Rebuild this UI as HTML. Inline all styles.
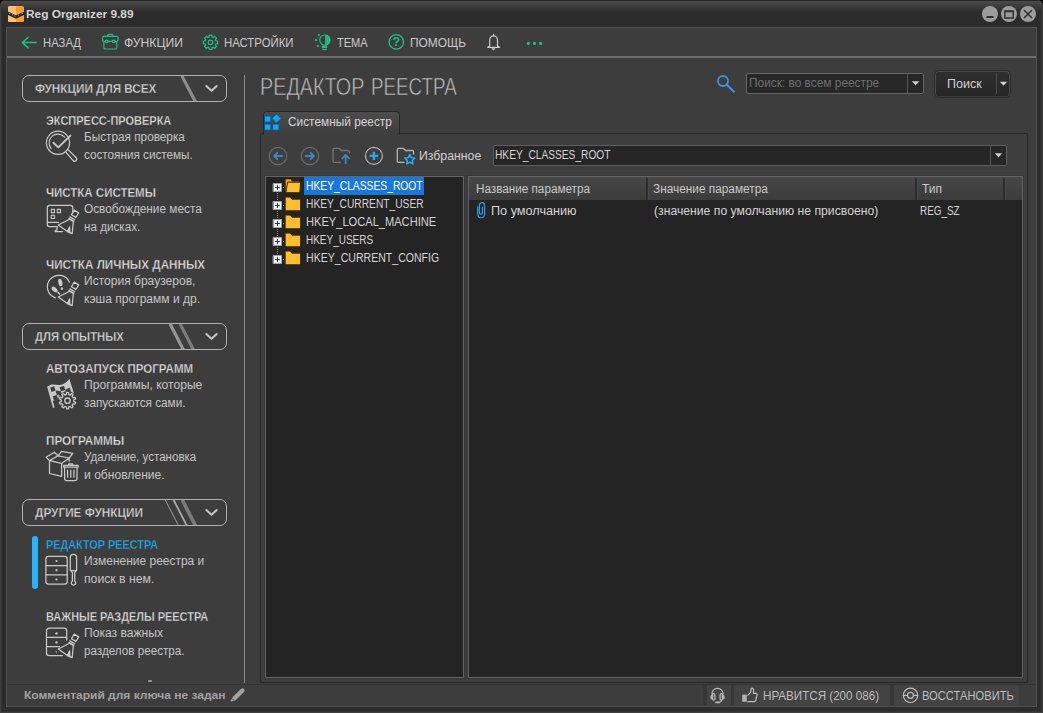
<!DOCTYPE html>
<html lang="ru">
<head>
<meta charset="utf-8">
<title>Reg Organizer 9.89</title>
<style>
*{box-sizing:border-box;margin:0;padding:0}
html,body{width:1043px;height:713px;overflow:hidden;background:#000}
body{font-family:"Liberation Sans",sans-serif;font-size:12px;color:#cfcfcf;position:relative}
.abs,.t{position:absolute}
.t{white-space:nowrap;line-height:16px;height:16px;transform-origin:0 50%}
#win{position:absolute;left:0;top:0;width:1043px;height:713px;background:#2c2c2c;border-radius:6px 6px 0 0;overflow:hidden;box-shadow:inset 0 0 0 1px #404040,inset 0 0 0 2px #333}
#titlegrad{position:absolute;left:1px;top:0;width:1041px;height:12px;background:linear-gradient(#262626 0,#262626 1px,#4b4b4b 1px,#454545 3px,#2c2c2c 12px)}
#frame{position:absolute;left:6px;top:27px;width:1031px;height:680px;background:#3d3d3d;border:1px solid #525252}
#tbsep{position:absolute;left:7px;top:56px;width:1029px;height:2px;background:#6e6e6e}
.wb{position:absolute;top:6px;width:16px;height:16px;border-radius:8px;background:#9c9c9c}
svg{position:absolute;overflow:visible}
.tb{font-size:12.8px;color:#c9c9c9;top:35px}
.hd{position:absolute;left:22px;width:205px;height:27px;border:1px solid #b2b2b2;border-radius:7px}
.hdt{font-size:12px;color:#d6d6d6;font-weight:bold;-webkit-text-stroke:.3px #3d3d3d}
.it{font-size:12.4px;font-weight:bold;color:#dedede;-webkit-text-stroke:.3px #3d3d3d}
.ds{font-size:12px;color:#c4c4c4}
.tr{font-size:12px;color:#d4d4d4}
.sb{font-size:12px;color:#bdbdbd}
</style>
</head>
<body>
<div id="win">
<div id="titlegrad"></div>
<div id="frame"></div>
<div id="tbsep"></div>

<!-- title -->
<span class="t" id="ttl" style="left:26.4px;top:6px;font-size:11px;font-weight:bold;color:#d4d4d4;transform:scaleX(1.079)">Reg Organizer 9.89</span>
<div class="wb" style="left:982px"></div>
<div class="wb" style="left:1001px"></div>
<div class="wb" style="left:1020px"></div>

<!-- toolbar -->
<span class="t tb" id="tb1" style="left:42.8px;transform:scaleX(0.883)">НАЗАД</span>
<span class="t tb" id="tb2" style="left:123.6px;transform:scaleX(0.953)">ФУНКЦИИ</span>
<span class="t tb" id="tb3" style="left:223.6px;transform:scaleX(0.888)">НАСТРОЙКИ</span>
<span class="t tb" id="tb4" style="left:336.7px;transform:scaleX(0.863)">ТЕМА</span>
<span class="t tb" id="tb5" style="left:410.2px;transform:scaleX(0.932)">ПОМОЩЬ</span>

<!-- left panel -->
<div class="abs" style="left:244px;top:75px;width:1px;height:608px;background:#8e8e8e"></div>

<div class="hd" style="top:75px"></div>
<span class="t hdt" id="h1" style="left:34.7px;top:81px;transform:scaleX(0.976)">ФУНКЦИИ ДЛЯ ВСЕХ</span>
<div class="hd" style="top:323px"></div>
<span class="t hdt" id="h2" style="left:34.9px;top:329px;transform:scaleX(0.941)">ДЛЯ ОПЫТНЫХ</span>
<div class="hd" style="top:499px"></div>
<span class="t hdt" id="h3" style="left:35.1px;top:505px;transform:scaleX(0.983)">ДРУГИЕ ФУНКЦИИ</span>

<span class="t it" id="i1" style="left:46.2px;top:113px;transform:scaleX(0.887)">ЭКСПРЕСС-ПРОВЕРКА</span>
<span class="t ds" id="d1a" style="left:84.1px;top:129px;transform:scaleX(0.981)">Быстрая проверка</span>
<span class="t ds" id="d1b" style="left:84.1px;top:147px;transform:scaleX(0.976)">состояния системы.</span>

<span class="t it" id="i2" style="left:46.2px;top:185px;transform:scaleX(0.927)">ЧИСТКА СИСТЕМЫ</span>
<span class="t ds" id="d2a" style="left:84.1px;top:201px;transform:scaleX(0.984)">Освобождение места</span>
<span class="t ds" id="d2b" style="left:84.1px;top:219px;transform:scaleX(0.972)">на дисках.</span>

<span class="t it" id="i3" style="left:46.2px;top:257px;transform:scaleX(0.942)">ЧИСТКА ЛИЧНЫХ ДАННЫХ</span>
<span class="t ds" id="d3a" style="left:84.1px;top:273px;transform:scaleX(1.003)">История браузеров,</span>
<span class="t ds" id="d3b" style="left:84.1px;top:291px;transform:scaleX(1.005)">кэша программ и др.</span>

<span class="t it" id="i4" style="left:46.2px;top:361px;transform:scaleX(0.932)">АВТОЗАПУСК ПРОГРАММ</span>
<span class="t ds" id="d4a" style="left:84.1px;top:377px;transform:scaleX(1.009)">Программы, которые</span>
<span class="t ds" id="d4b" style="left:84.1px;top:395px;transform:scaleX(0.980)">запускаются сами.</span>

<span class="t it" id="i5" style="left:46.2px;top:433px;transform:scaleX(0.948)">ПРОГРАММЫ</span>
<span class="t ds" id="d5a" style="left:84.1px;top:449px;transform:scaleX(0.964)">Удаление, установка</span>
<span class="t ds" id="d5b" style="left:84.1px;top:467px;transform:scaleX(1.009)">и обновление.</span>

<div class="abs" style="left:31.7px;top:535.5px;width:6.6px;height:53px;border-radius:3.3px;background:#2cb2f5"></div>
<div class="abs" style="left:148px;top:680px;width:4px;height:2px;background:#999;border-radius:1px"></div>
<span class="t it" id="i6" style="left:46.2px;top:537px;color:#1ea7ee;transform:scaleX(0.876)">РЕДАКТОР РЕЕСТРА</span>
<span class="t ds" id="d6a" style="left:84.1px;top:553px;transform:scaleX(0.997)">Изменение реестра и</span>
<span class="t ds" id="d6b" style="left:84.1px;top:571px;transform:scaleX(1.018)">поиск в нем.</span>

<span class="t it" id="i7" style="left:46.2px;top:609px;transform:scaleX(0.883)">ВАЖНЫЕ РАЗДЕЛЫ РЕЕСТРА</span>
<span class="t ds" id="d7a" style="left:84.1px;top:625px;transform:scaleX(1.007)">Показ важных</span>
<span class="t ds" id="d7b" style="left:84.1px;top:643px;transform:scaleX(0.972)">разделов реестра.</span>

<!-- main -->
<span class="t" id="mh" style="left:259.9px;top:71.5px;height:30px;line-height:30px;font-size:23.3px;color:#bcbcbc;word-spacing:1px;-webkit-text-stroke:.55px #3d3d3d;transform:scaleX(0.851)">РЕДАКТОР</span> <span class="t" id="mh2" style="left:371.4px;top:71.5px;height:30px;line-height:30px;font-size:23.3px;color:#bcbcbc;word-spacing:1px;-webkit-text-stroke:.55px #3d3d3d;transform:scaleX(0.807)">РЕЕСТРА</span>

<!-- search -->
<div class="abs" style="left:746px;top:73px;width:178px;height:21px;background:#272727;border:1px solid #666;border-radius:2px"></div>
<div class="abs" style="left:907px;top:74px;width:1px;height:19px;background:#555"></div>
<span class="t" id="sph" style="left:748.5px;top:75px;font-size:12px;color:#6f6f6f;transform:scaleX(0.990)">Поиск: во всем реестре</span>
<div class="abs" style="left:934px;top:70px;width:77px;height:28px;background:#2b2b2b;border-radius:5px"></div>
<div class="abs" style="left:935px;top:71px;width:75px;height:26px;background:linear-gradient(#2e2e2e,#272727);border:1px solid #4a4a4a;border-bottom-color:#3a3a3a;border-radius:4px"></div>
<div class="abs" style="left:996px;top:73px;width:1px;height:21px;background:#4c4c4c"></div>
<span class="t" id="sbt" style="left:947.4px;top:75.5px;font-size:12.5px;color:#d0d0d0;transform:scaleX(0.999)">Поиск</span>

<!-- tab + content -->
<div class="abs" style="left:260px;top:133px;width:768px;height:550px;background:#3e3e3e;border:1px solid #272727;border-radius:0 2px 2px 2px"></div>
<div class="abs" style="left:263px;top:111px;width:137px;height:24px;background:linear-gradient(#4c4c4c,#3e3e3e);border:1px solid #272727;border-bottom:none;border-radius:4px 4px 0 0"></div>
<span class="t" id="tabt" style="left:287.5px;top:113.7px;font-size:12px;color:#d4d4d4;transform:scaleX(0.988)">Системный реестр</span>

<span class="t" id="fav" style="left:418.7px;top:147.5px;font-size:12px;color:#d0d0d0;transform:scaleX(1.023)">Избранное</span>
<div class="abs" style="left:493px;top:145px;width:514px;height:21px;background:#262626;border:1px solid #5e5e5e;border-radius:2px"></div>
<div class="abs" style="left:990px;top:146px;width:1px;height:19px;background:#555"></div>
<span class="t tr" id="addr" style="left:494.5px;top:147px;transform:scaleX(0.849)">HKEY_CLASSES_ROOT</span>

<!-- tree -->
<div class="abs" style="left:264px;top:175px;width:201px;height:504px;background:#363636"></div>
<div class="abs" style="left:265px;top:176px;width:199px;height:502px;background:#242424;border:1px solid #646464"></div>
<div class="abs" style="left:304px;top:177px;width:120px;height:18px;background:#1878d8"></div>
<span class="t tr" id="k1" style="left:306.4px;top:178px;color:#fff;transform:scaleX(0.857)">HKEY_CLASSES_ROOT</span>
<span class="t tr" id="k2" style="left:306.0px;top:196px;transform:scaleX(0.852)">HKEY_CURRENT_USER</span>
<span class="t tr" id="k3" style="left:306.2px;top:214px;transform:scaleX(0.925)">HKEY_LOCAL_MACHINE</span>
<span class="t tr" id="k4" style="left:306.0px;top:232px;transform:scaleX(0.831)">HKEY_USERS</span>
<span class="t tr" id="k5" style="left:306.0px;top:250px;transform:scaleX(0.880)">HKEY_CURRENT_CONFIG</span>

<!-- list -->
<div class="abs" style="left:467px;top:175px;width:557px;height:504px;background:#363636"></div>
<div class="abs" style="left:468px;top:176px;width:555px;height:502px;background:#242424;border:1px solid #646464"></div>
<div class="abs" style="left:469px;top:177px;width:553px;height:23px;background:linear-gradient(#474747,#3c3c3c)"></div>
<div class="abs" style="left:646px;top:178px;width:3px;height:22px;background:linear-gradient(90deg,#2d2d2d 66%,#484848 66%)"></div>
<div class="abs" style="left:915px;top:178px;width:3px;height:22px;background:linear-gradient(90deg,#2d2d2d 66%,#484848 66%)"></div>
<div class="abs" style="left:1003px;top:178px;width:3px;height:22px;background:linear-gradient(90deg,#2d2d2d 66%,#484848 66%)"></div>
<span class="t tr" id="c1" style="left:475.5px;top:180.5px;color:#c8c8c8;transform:scaleX(0.975)">Название параметра</span>
<span class="t tr" id="c2" style="left:653.3px;top:180.5px;color:#c8c8c8;transform:scaleX(0.986)">Значение параметра</span>
<span class="t tr" id="c3" style="left:922.4px;top:180.5px;color:#c8c8c8;transform:scaleX(1.003)">Тип</span>
<span class="t tr" id="r1" style="left:491.3px;top:202.7px;transform:scaleX(1.055)">По умолчанию</span>
<span class="t tr" id="r2" style="left:654.2px;top:202.7px;transform:scaleX(1.017)">(значение по умолчанию не присвоено)</span>
<span class="t tr" id="r3" style="left:920.3px;top:202.7px;transform:scaleX(0.824)">REG_SZ</span>

<!-- status bar -->
<div class="abs" style="left:7px;top:684px;width:1029px;height:1px;background:#343434"></div>
<div class="abs" style="left:7px;top:685px;width:1029px;height:21px;background:#3d3d3d"></div>
<div class="abs" style="left:703px;top:685px;width:316px;height:20px;background:#373737"></div>
<div class="abs" style="left:707px;top:685px;width:24px;height:20px;background:#434343"></div>
<div class="abs" style="left:734px;top:685px;width:156px;height:20px;background:#434343"></div>
<div class="abs" style="left:894px;top:685px;width:125px;height:20px;background:#434343"></div>
<span class="t" id="st1" style="left:23.5px;top:687px;font-size:11.5px;font-weight:bold;color:#a2a2a2;transform:scaleX(1.043)">Комментарий для ключа не задан</span>
<span class="t sb" id="st2" style="left:762.5px;top:688px;font-size:12.5px;transform:scaleX(0.929)">НРАВИТСЯ (200 086)</span>
<span class="t sb" id="st3" style="left:922.2px;top:688px;font-size:12.5px;transform:scaleX(0.894)">ВОССТАНОВИТЬ</span>

<svg width="1043" height="713" viewBox="0 0 1043 713" style="left:0;top:0" fill="none" stroke-linecap="round" stroke-linejoin="round">
<!-- app icon -->
<g stroke="none">
<rect x="8" y="6" width="16" height="16" rx="1.6" fill="#ff9a35"/>
<path d="M9.6 6H16V22H9.6A1.6 1.6 0 0 1 8 20.4V7.6A1.6 1.6 0 0 1 9.6 6Z" fill="#ffbd7c"/>
<path d="M8 11.6L16 15.2L24 11.7V15L16 18.8L8 15.1Z" fill="#2a2a2a"/>
<rect x="9" y="12.6" width="1.3" height="1.3" fill="#3fbf7f"/><rect x="12" y="14" width="1.3" height="1.3" fill="#e0605a"/><rect x="21.5" y="12.6" width="1.3" height="1.3" fill="#6ab8f0"/><rect x="18" y="14.6" width="1" height="1" fill="#9ab"/><rect x="14.6" y="15.6" width="1" height="1" fill="#9ab"/>
</g>
<!-- window buttons glyphs -->
<g stroke="#2e2e2e" stroke-width="1.6" stroke-linecap="butt" stroke-linejoin="miter">
<path d="M986.5 17H993.5" stroke-width="2"/>
<path d="M1004.8 11H1013.2V18H1004.8Z M1004.8 11.6H1013.2" stroke-width="1.4"/>
<path d="M1024 10L1032 18M1032 10L1024 18" stroke-width="1.5"/>
</g>
<!-- toolbar icons -->
<g stroke="#1fbf84" stroke-width="1.15">
<path d="M36.2 42.6H22.4M28.2 37.3L22.4 42.6L28.2 47.9" stroke-width="1.5"/>
<path d="M107.6 36.3v-.8a1.2 1.2 0 0 1 1.2-1.2h3a1.2 1.2 0 0 1 1.2 1.2v.8"/>
<path d="M103.9 36.3h12.8a1.3 1.3 0 0 1 1.3 1.3v2.4a1.3 1.3 0 0 1-1.3 1.3H115M112.2 41.3h-4.2M105.4 41.3h-1.5a1.3 1.3 0 0 1-1.3-1.3v-2.4a1.3 1.3 0 0 1 1.3-1.3"/>
<circle cx="106.7" cy="41.4" r="1.3"/><circle cx="113.6" cy="41.4" r="1.3"/>
<path d="M103.9 41.5v6.2a1.3 1.3 0 0 0 1.3 1.3h10.2a1.3 1.3 0 0 0 1.3-1.3v-6.2"/>
<path d="M211.80 49.43 L209.20 49.43 L208.89 47.56 L207.92 47.16 L206.38 48.26 L204.54 46.42 L205.64 44.88 L205.24 43.91 L203.37 43.60 L203.37 41.00 L205.24 40.69 L205.64 39.72 L204.54 38.18 L206.38 36.34 L207.92 37.44 L208.89 37.04 L209.20 35.17 L211.80 35.17 L212.11 37.04 L213.08 37.44 L214.62 36.34 L216.46 38.18 L215.36 39.72 L215.76 40.69 L217.63 41.00 L217.63 43.60 L215.76 43.91 L215.36 44.88 L216.46 46.42 L214.62 48.26 L213.08 47.16 L212.11 47.56Z" stroke-width="1.25"/>
<circle cx="210.5" cy="42.3" r="2.3" stroke-width="1.25"/>
<circle cx="324.7" cy="40" r="5" stroke-width="1.1"/>
<circle cx="396.3" cy="41.9" r="7.2" stroke-width="1.3"/>
</g>
<g fill="#1fbf84" stroke="none">
<path d="M325.2 34.6A5.4 5.4 0 0 1 325.2 45.4Z"/>
<path d="M321.9 45.6h5.3v2.3h-5.3zM321.9 48.7h5.3a2.6 1.6 0 0 1-5.3 0z"/>
<rect x="317.9" y="34" width="1.9" height="1.9" rx=".6"/><rect x="315.1" y="39.1" width="1.9" height="1.9" rx=".3"/><rect x="316.9" y="45.1" width="1.9" height="1.9" rx=".3"/>
<circle cx="528.3" cy="43.4" r="1.55"/><circle cx="534.5" cy="43.4" r="1.55"/><circle cx="540.6" cy="43.4" r="1.55"/>
</g>
<text x="396.4" y="46.4" font-family="Liberation Sans,sans-serif" font-weight="bold" font-size="12.5" fill="#1fbf84" text-anchor="middle">?</text>
<g stroke="#cbcbcb" stroke-width="1.2">
<path d="M489.7 46V40.3a3.9 4.4 0 0 1 7.8 0V46l2 1.3H487.7ZM493.6 35.6V34.4"/>
<path d="M492.1 48.6h3l-1.5 1.3z" fill="#cbcbcb" stroke-width=".6"/>
</g>

<!-- header slashes + chevrons -->
<clipPath id="hc"><rect x="23" y="76" width="203" height="25"/><rect x="23" y="324" width="203" height="25"/><rect x="23" y="500" width="203" height="25"/></clipPath>
<g stroke-linecap="butt" clip-path="url(#hc)">
<path d="M181.9 76L195.6 102" stroke="#8c8c8c" stroke-width="3.2"/>
<path d="M170.1 324L183.5 350" stroke="#969696" stroke-width="3.2"/>
<path d="M180.2 324L193.6 350" stroke="#7c7c7c" stroke-width="3.2"/>
<path d="M165.3 500L178.7 526" stroke="#909090" stroke-width="1.1"/>
<path d="M173.6 500L187 526" stroke="#a8a8a8" stroke-width="1.8"/>
<path d="M182.3 500L195.6 526" stroke="#7a7a7a" stroke-width="3.7"/>
</g>
<g stroke="#c2c2c2" stroke-width="2.1">
<path d="M206.3 86L211.5 90.8L216.7 86"/>
<path d="M206.3 334L211.5 338.8L216.7 334"/>
<path d="M206.3 510L211.5 514.8L216.7 510"/>
</g>
</svg>

<svg width="1043" height="713" viewBox="0 0 1043 713" style="left:0;top:0" fill="none" stroke="#c9c9c9" stroke-width="1.25" stroke-linecap="round" stroke-linejoin="round">
<!-- 1 magnifier check -->
<circle cx="58" cy="142.8" r="11.6"/>
<path d="M51.2 148.6A8.7 8.7 0 0 1 64.6 137.2" stroke-width="1.1"/>
<path d="M53.4 142.7L58.3 147.4L70.4 135.6" stroke-width="1.9"/>
<path d="M65.5 151.7L72.9 160.3a1.9 1.9 0 0 0 3.3-2.6L67.9 149.4"/>
<!-- 2 monitor broom -->
<path d="M72.8 213V207.6a2.3 2.3 0 0 0-2.3-2.3H49.6a2.3 2.3 0 0 0-2.3 2.3v16.7a2.3 2.3 0 0 0 2.3 2.3H57.3M47.3 222.4H58.6M57.4 226.8L57 229.9 55.2 230.6V231.6H62.6"/>
<rect x="51.3" y="209.4" width="3.2" height="3.2" stroke-width="1.1"/><rect x="57.3" y="209.4" width="3.2" height="3.2" stroke-width="1.1"/><rect x="51.3" y="215.3" width="3.2" height="3.2" stroke-width="1.1"/>
<path d="M74.2 210.1 L78.7 212.9 L75.9 217.4 L71.4 214.8Z"/><path d="M69.9 216.9 L74.7 219.8"/><path d="M69.0 218.4 L73.8 221.3"/><path d="M69.6 219.3 L58.3 225.0 L67.4 231.6 L72.2 233.6 L73.3 221.4Z"/><path d="M67.4 231.6 L69.6 226.8 L69.9 232.7" fill="#c9c9c9"/>
<!-- 3 footprints broom -->
<path d="M69.4 282.2A11.5 11.5 0 1 0 55.4 297.8"/>
<ellipse cx="60.3" cy="282.5" rx="2" ry="3.8" transform="rotate(-12 60.3 282.5)" fill="#c9c9c9" stroke="none"/>
<ellipse cx="61.9" cy="288.6" rx="1.2" ry="1.3" fill="#c9c9c9" stroke="none"/>
<ellipse cx="54.6" cy="289.6" rx="2" ry="3.6" transform="rotate(-48 54.6 289.6)" fill="#c9c9c9" stroke="none"/>
<path d="M58.3 292.6L59.6 293.8" stroke-width="1.6"/>
<path d="M74.2 282.1 L78.7 284.9 L75.9 289.4 L71.4 286.8Z"/><path d="M69.9 288.9 L74.7 291.8"/><path d="M69.0 290.4 L73.8 293.3"/><path d="M69.6 291.3 L58.3 297.0 L67.4 303.6 L72.2 305.6 L73.3 293.4Z"/><path d="M67.4 303.6 L69.6 298.8 L69.9 304.7" fill="#c9c9c9"/>
<!-- 4 flag gear -->
<g stroke="none" fill="#c9c9c9">
<path d="M47.1 386.6L48.6 385.9L54.6 407.3L53 407.9Z"/>
<path d="M48.6 385.9C53 382.5 58 386.5 63 384.2C66 382.8 68 381 69.3 378.8L73.8 392.8C72 395 70 396 67.6 396.8C63 396 58 398.5 54 400.5L52.4 400.9Z"/>
</g>
<g stroke="none" fill="#3d3d3d">
<path d="M50.2 387.4L54.2 386.3L55.5 390.6L51.5 391.9Z"/>
<path d="M59.6 386.9L64 385.9L65.3 390L60.9 391.2Z"/>
<path d="M55.5 390.6L60.9 391.2L62.2 395.5L56.8 395.1Z"/>
<path d="M65.3 390L69.6 387.6L70.9 391.8L66.6 394.2Z"/>
<path d="M52.8 396.2L56.8 395.1L58 399L54 400.5Z"/>
<circle cx="67.5" cy="400.7" r="9.6"/>
</g>
<path d="M68.38 408.95 L66.62 408.95 L66.27 406.78 L64.93 406.34 L63.37 407.90 L61.93 406.86 L62.93 404.89 L62.10 403.75 L59.92 404.09 L59.38 402.41 L61.34 401.41 L61.34 399.99 L59.38 398.99 L59.92 397.31 L62.10 397.65 L62.93 396.51 L61.93 394.54 L63.37 393.50 L64.93 395.06 L66.27 394.62 L66.62 392.45 L68.38 392.45 L68.73 394.62 L70.07 395.06 L71.63 393.50 L73.07 394.54 L72.07 396.51 L72.90 397.65 L75.08 397.31 L75.62 398.99 L73.66 399.99 L73.66 401.41 L75.62 402.41 L75.08 404.09 L72.90 403.75 L72.07 404.89 L73.07 406.86 L71.63 407.90 L70.07 406.34 L68.73 406.78Z"/>
<circle cx="67.5" cy="400.7" r="2.7" stroke-width="1.3"/>
<!-- 5 box trash -->
<path d="M49.5 460.6V473.5L61.6 476.3V463.4ZM49.5 460.6L58 455.8L69.2 458L61.6 463.4M49.5 460.6L46.2 457.2L54.3 452.2L58 455.8L61.6 451.3L72.8 453.3L69.2 458V461.2"/>
<path d="M63.7 465.4H78.1V467.2H63.7ZM68.7 465.4V463.8H72.5V465.4M64.6 467.2V478.6a1.9 1.9 0 0 0 1.9 1.9H75.1a1.9 1.9 0 0 0 1.9-1.9V467.2M67.6 470.2V477.2M70.8 470.2V477.2M73.9 470.2V477.2"/>
<!-- 6 cabinet screwdriver -->
<rect x="45.9" y="556.4" width="21.3" height="27.7" rx="2.6"/><path d="M45.9 565.6H67.2M45.9 574.9H67.2"/><circle cx="56.5" cy="561.0" r="1.1" fill="#c9c9c9" stroke="none"/><circle cx="56.5" cy="570.2" r="1.1" fill="#c9c9c9" stroke="none"/><circle cx="56.5" cy="579.5" r="1.1" fill="#c9c9c9" stroke="none"/>
<path d="M70.3 570.6V557.4a3.1 3.1 0 0 1 6.3 0V570.6ZM71.1 570.8L72.4 572.6V581L71.4 582.4V584L73.5 585.2L75.6 584V582.4L74.7 581V572.6L75.9 570.8"/>
<!-- 7 cabinet broom -->
<path d="M66.7 640V630.8a2.6 2.6 0 0 0-2.6-2.6H49.1a2.6 2.6 0 0 0-2.6 2.6V653.1a2.6 2.6 0 0 0 2.6 2.6H62.5M46.5 637.3H66.7M46.5 646.5H59.5"/>
<circle cx="56.5" cy="633.4" r="1.2" fill="#c9c9c9" stroke="none"/><circle cx="56.5" cy="642.4" r="1.2" fill="#c9c9c9" stroke="none"/><path d="M56 650.6A1.2 1.2 0 0 0 57.2 652.6" fill="#c9c9c9" stroke="none"/>
<path d="M74.2 634.1 L78.7 636.9 L75.9 641.4 L71.4 638.8Z"/><path d="M69.9 640.9 L74.7 643.8"/><path d="M69.0 642.4 L73.8 645.3"/><path d="M69.6 643.3 L58.3 649.0 L67.4 655.6 L72.2 657.6 L73.3 645.4Z"/><path d="M67.4 655.6 L69.6 650.8 L69.9 656.7" fill="#c9c9c9"/>
</svg>

<svg width="1043" height="713" viewBox="0 0 1043 713" style="left:0;top:0" fill="none" stroke-linecap="round" stroke-linejoin="round">
<!-- tab icon -->
<g fill="#14a6f5" stroke="#0d4f8c" stroke-width=".8">
<rect x="264.9" y="116" width="6" height="6"/><rect x="264.9" y="124.1" width="6" height="6"/><rect x="273" y="124.1" width="6" height="6"/>
<path d="M276.6 114L281.1 118.5L276.6 123L272.1 118.5Z"/>
</g>
<!-- nav -->
<circle cx="278" cy="156" r="8.7" stroke="#6c6c6c" stroke-width="1.2"/>
<circle cx="310" cy="156" r="8.7" stroke="#6c6c6c" stroke-width="1.2"/>
<path d="M282.4 156H274.4M277.3 152.9L274.2 156L277.3 159.1" stroke="#3989ba" stroke-width="2"/>
<path d="M305.6 156H313.6M310.7 152.9L313.8 156L310.7 159.1" stroke="#3989ba" stroke-width="2"/>
<path d="M340.5 162.4H334.4a1.4 1.4 0 0 1-1.4-1.4V149.7a1.4 1.4 0 0 1 1.4-1.4H339l2.4 2.2H348a1.4 1.4 0 0 1 1.4 1.4V153" stroke="#747474" stroke-width="1.3"/>
<path d="M345.7 163.2V155.4M342.3 158.4L345.7 155L349.1 158.4" stroke="#3989ba" stroke-width="1.8"/>
<circle cx="373.9" cy="155.9" r="8.5" stroke="#b4b4b4" stroke-width="1.2"/>
<path d="M369.7 155.9H378.1M373.9 151.7V160.1" stroke="#2aa9ef" stroke-width="2.4" stroke-linecap="butt"/>
<path d="M404 162.4H398.7a1.4 1.4 0 0 1-1.4-1.4V149.7a1.4 1.4 0 0 1 1.4-1.4H403.2l2.4 2.2H412.2a1.4 1.4 0 0 1 1.4 1.4V154" stroke="#b4b4b4" stroke-width="1.3"/>
<path d="M409.80 154.50 L411.27 157.68 L414.75 158.09 L412.18 160.47 L412.86 163.91 L409.80 162.20 L406.74 163.91 L407.42 160.47 L404.85 158.09 L408.33 157.68Z" stroke="#2aa9ef" stroke-width="1.6"/>
<!-- combobox arrows -->
<g fill="#cfcfcf" stroke="none">
<path d="M994.8 153.2H1002.2L998.5 157.2Z"/>
<path d="M911.9 81.2H919.3L915.6 85.2Z"/>
<path d="M999.8 81.8H1007.2L1003.5 85.8Z"/>
</g>
<!-- search icon -->
<circle cx="723" cy="81" r="5" stroke="#3f8fdc" stroke-width="1.9"/>
<path d="M726.8 84.8L734 91.6" stroke="#3f8fdc" stroke-width="2.2"/>
<!-- tree -->
<rect x="273.5" y="183.5" width="8" height="8" fill="#f0f0f0" stroke="#a4a4a4" stroke-width="1"/><path d="M275 187.5H280M277.5 185V190" stroke="#23307a" stroke-width="1" stroke-linecap="butt"/><path d="M285.6 192.4V180.0a.7 .7 0 0 1 .7-.7h5.2l.9 2.2H300v1.2H288.2L286.8 192.4Z" fill="#f2ad1e" transform="translate(-.4 -.4)" transform="translate(-.4 -.4)" stroke="#3a2600" stroke-width=".9"/><path d="M286.4 192.8L287.9 182.70000000000002H300.9L300.2 192.8Z" fill="#fdbf33" transform="translate(-.4 -.4)" transform="translate(-.4 -.4)" stroke="#3a2600" stroke-width=".9"/><rect x="283" y="187" width="1" height="1" fill="#8c8c8c"/><path d="M277.5 193V201" stroke="#8c8c8c" stroke-width="1" stroke-dasharray="1 1" stroke-linecap="butt"/>
<rect x="273.5" y="201.5" width="8" height="8" fill="#f0f0f0" stroke="#a4a4a4" stroke-width="1"/><path d="M275 205.5H280M277.5 203V208" stroke="#23307a" stroke-width="1" stroke-linecap="butt"/><path d="M285.6 210.9V198.2a.7 .7 0 0 1 .7-.7h4.4l1.6 2.1H300.2a.7 .7 0 0 1 .7 .7V210.9Z" fill="#fdbd30" transform="translate(-.4 -.4)" transform="translate(-.4 -.4)" stroke="#3a2600" stroke-width=".9"/><rect x="283" y="205" width="1" height="1" fill="#8c8c8c"/><path d="M277.5 211V219" stroke="#8c8c8c" stroke-width="1" stroke-dasharray="1 1" stroke-linecap="butt"/>
<rect x="273.5" y="219.5" width="8" height="8" fill="#f0f0f0" stroke="#a4a4a4" stroke-width="1"/><path d="M275 223.5H280M277.5 221V226" stroke="#23307a" stroke-width="1" stroke-linecap="butt"/><path d="M285.6 228.9V216.2a.7 .7 0 0 1 .7-.7h4.4l1.6 2.1H300.2a.7 .7 0 0 1 .7 .7V228.9Z" fill="#fdbd30" transform="translate(-.4 -.4)" transform="translate(-.4 -.4)" stroke="#3a2600" stroke-width=".9"/><rect x="283" y="223" width="1" height="1" fill="#8c8c8c"/><path d="M277.5 229V237" stroke="#8c8c8c" stroke-width="1" stroke-dasharray="1 1" stroke-linecap="butt"/>
<rect x="273.5" y="237.5" width="8" height="8" fill="#f0f0f0" stroke="#a4a4a4" stroke-width="1"/><path d="M275 241.5H280M277.5 239V244" stroke="#23307a" stroke-width="1" stroke-linecap="butt"/><path d="M285.6 246.9V234.2a.7 .7 0 0 1 .7-.7h4.4l1.6 2.1H300.2a.7 .7 0 0 1 .7 .7V246.9Z" fill="#fdbd30" transform="translate(-.4 -.4)" transform="translate(-.4 -.4)" stroke="#3a2600" stroke-width=".9"/><rect x="283" y="241" width="1" height="1" fill="#8c8c8c"/><path d="M277.5 247V255" stroke="#8c8c8c" stroke-width="1" stroke-dasharray="1 1" stroke-linecap="butt"/>
<rect x="273.5" y="255.5" width="8" height="8" fill="#f0f0f0" stroke="#a4a4a4" stroke-width="1"/><path d="M275 259.5H280M277.5 257V262" stroke="#23307a" stroke-width="1" stroke-linecap="butt"/><path d="M285.6 264.9V252.2a.7 .7 0 0 1 .7-.7h4.4l1.6 2.1H300.2a.7 .7 0 0 1 .7 .7V264.9Z" fill="#fdbd30" transform="translate(-.4 -.4)" transform="translate(-.4 -.4)" stroke="#3a2600" stroke-width=".9"/><rect x="283" y="259" width="1" height="1" fill="#8c8c8c"/>
<!-- paperclip -->
<path d="M477.7 206.8V214.3a3.45 3.45 0 0 0 6.9 0V205.3a2.6 2.6 0 0 0-5.2 0V212.7a1.5 1.5 0 0 0 3 0V207.2" stroke="#2a9fe8" stroke-width="1.2"/>
<!-- status icons -->
<g stroke="#bdbdbd" stroke-width="1.2">
<g transform="translate(0 .8)"><path d="M712 693.4V692.8a5.5 5.2 0 0 1 11 0v.6"/>
<rect x="712.6" y="692.8" width="2.3" height="6.6" rx="1.15"/><rect x="720.1" y="692.8" width="2.3" height="6.6" rx="1.15"/>
<path d="M712.2 693.6a1.9 2.6 0 0 0 0 5.2zM722.8 693.6a1.9 2.6 0 0 1 0 5.2z" fill="#b4b4b4" stroke="none"/>
<path d="M721.6 699.6a3.6 2.6 0 0 1-2.4 2"/><rect x="715.3" y="700.8" width="4.2" height="1.7" rx=".6" fill="#bdbdbd" stroke="none"/></g>
<rect x="742.2" y="694.6" width="4.6" height="7.2" fill="#b0b0b0" stroke="none"/>
<path d="M748 695.2L750.6 692.4L751.2 688.6a1.3 1.3 0 0 1 2.3 .8V693.4H756a1.2 1.2 0 0 1 1.1 1.5L755.6 700.6a1.5 1.5 0 0 1-1.5 1.1H748"/>
<circle cx="910.5" cy="695.3" r="7.2"/><circle cx="910.5" cy="695.3" r="3"/>
<path d="M903.3 695.3H907.5M913.5 695.3H917.7"/>
</g>
<path d="M231.2 700.8L233.4 697.2L241.6 689.2a1.6 1.6 0 0 1 2.2 2.2L235.6 699.6Z" fill="#a2a2a2" stroke="#a2a2a2" stroke-width="1.2"/>
<path d="M232.8 699.2l.9 .9" stroke="#404040" stroke-width="1"/>
</svg>
</div>
</body>
</html>
